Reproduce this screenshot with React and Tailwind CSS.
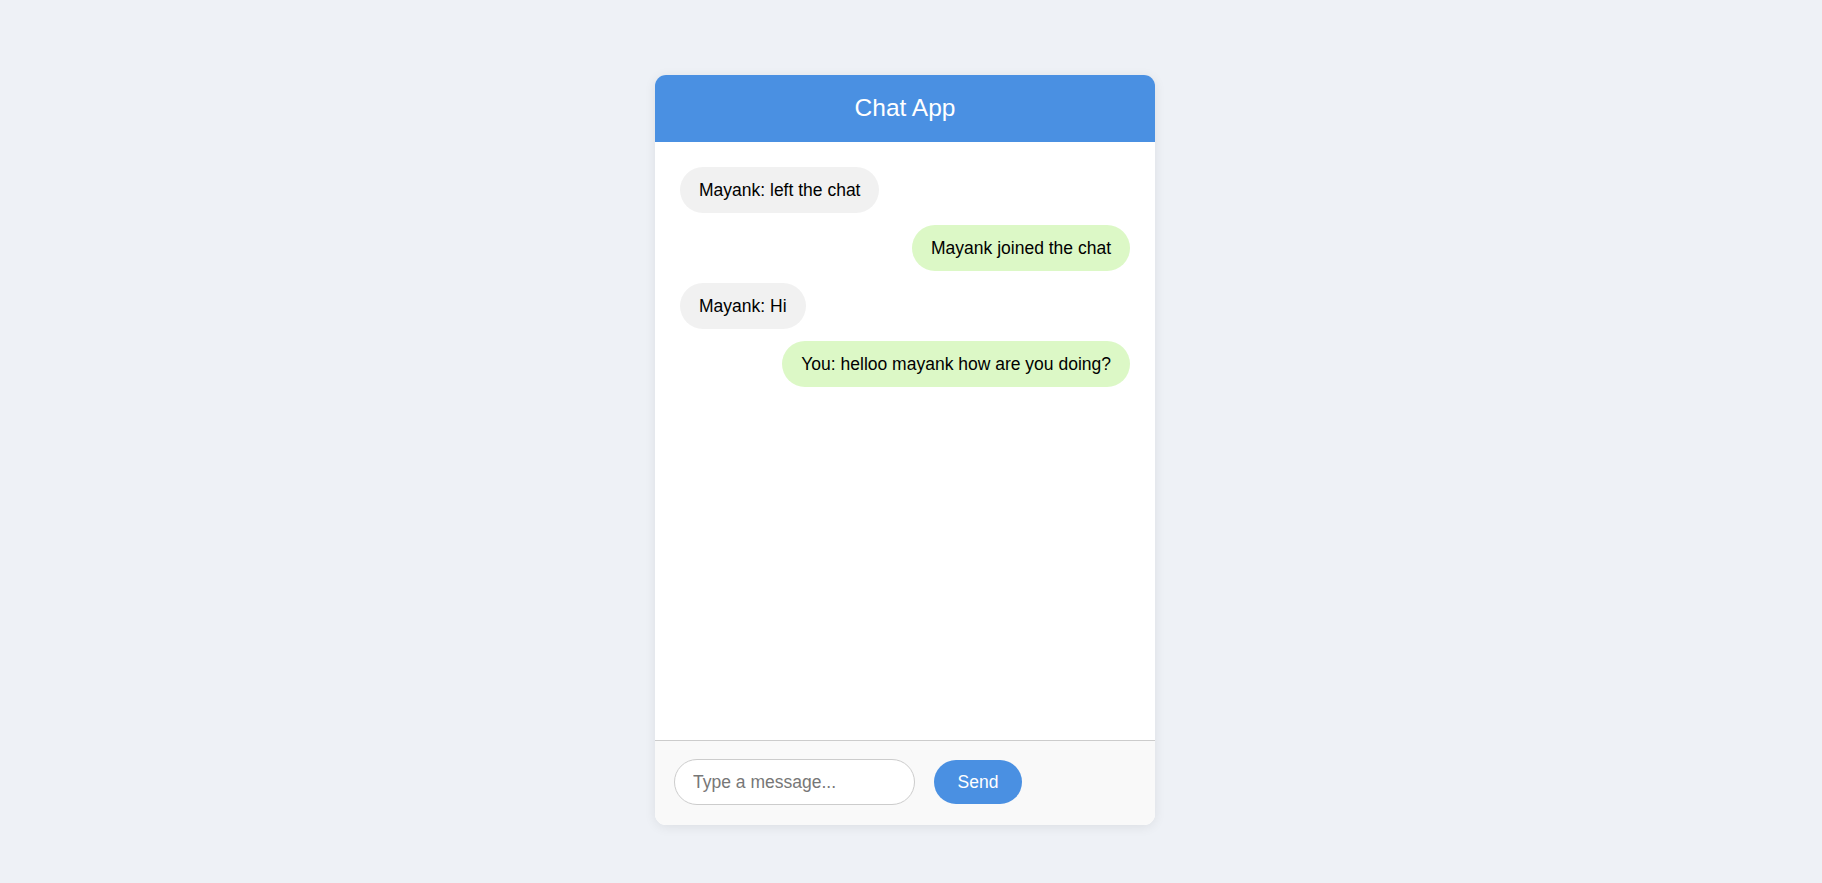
import { useState } from 'react';

const initialMessages = [
  { id: 1, text: 'Mayank: left the chat', mine: false },
  { id: 2, text: 'Mayank joined the chat', mine: true },
  { id: 3, text: 'Mayank: Hi', mine: false },
  { id: 4, text: 'You: helloo mayank how are you doing?', mine: true },
];

export default function App() {
  const [messages, setMessages] = useState(initialMessages);
  const [draft, setDraft] = useState('');

  const send = () => {
    if (!draft.trim()) return;
    setMessages([...messages, { id: Date.now(), text: `You: ${draft}`, mine: true }]);
    setDraft('');
  };

  return (
    <div
      className="min-h-screen bg-[#eef1f6] pt-[75px] pr-[12px]"
      style={{ fontFamily: '"Liberation Sans", Arial, sans-serif' }}
    >
      <div className="mx-auto w-[500px] h-[750px] flex flex-col bg-white rounded-[11px] shadow-[0_2px_12px_rgba(0,0,0,0.08)] overflow-hidden">
        {/* HEADER */}
        <div className="h-[67px] shrink-0 bg-[#4a90e2] flex items-center justify-center">
          <h1 className="text-white text-[24.5px] leading-none">Chat App</h1>
        </div>

        {/* MESSAGES */}
        <div className="flex-1 overflow-y-auto px-[25px] pt-[25px] flex flex-col gap-[12px]">
          {messages.map((m) => (
            <div key={m.id} className={m.mine ? 'flex justify-end' : 'flex justify-start'}>
              <div
                className={`h-[46px] flex items-center px-[19px] rounded-[23px] text-[17.5px] text-black ${
                  m.mine ? 'bg-[#dcf8c6]' : 'bg-[#f1f1f1]'
                }`}
              >
                {m.text}
              </div>
            </div>
          ))}
        </div>

        {/* INPUT */}
        <div className="h-[85px] shrink-0 border-t border-[#cccccc] bg-[#f9f9f9] flex items-center px-[19px] gap-[19px] pb-[2px]">
          <input
            type="text"
            value={draft}
            onChange={(e) => setDraft(e.target.value)}
            onKeyDown={(e) => e.key === 'Enter' && send()}
            placeholder="Type a message..."
            className="w-[241px] h-[46px] px-[18px] rounded-[23px] border border-[#cccccc] bg-white text-[17.5px] placeholder:text-[#777] outline-none"
          />
          <button
            onClick={send}
            className="w-[88px] h-[44px] rounded-[22px] bg-[#4a90e2] text-white text-[17.5px]"
          >
            Send
          </button>
        </div>
      </div>
    </div>
  );
}
